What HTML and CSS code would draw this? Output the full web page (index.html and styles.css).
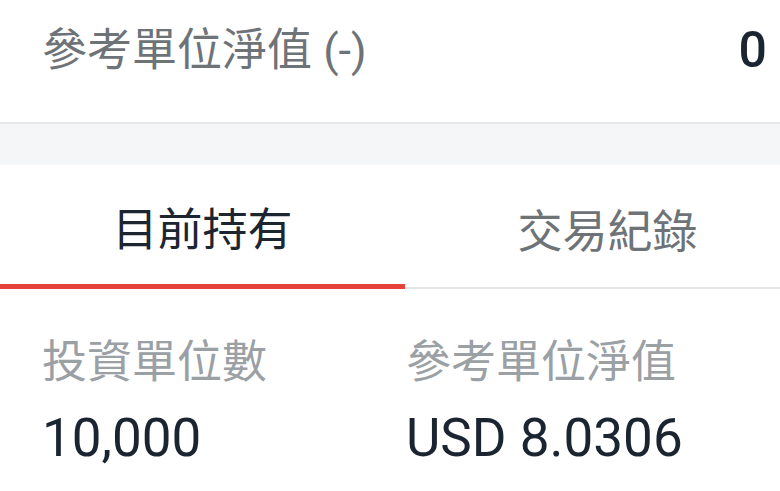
FILE: index.html
```html
<!DOCTYPE html>
<html lang="zh-Hant">
<head>
<meta charset="utf-8">
<link rel="stylesheet" href="styles.css">
</head>
<body>
<div class="page">
  <div class="summary">
    <span class="summary-label">參考單位淨值 (-)</span>
    <span class="summary-value">0</span>
  </div>
  <div class="band"></div>
  <div class="tabs">
    <div class="tab active">目前持有</div>
    <div class="tab">交易紀錄</div>
  </div>
  <div class="stats">
    <div class="stat">
      <div class="stat-label">投資單位數</div>
      <div class="stat-value">10,000</div>
    </div>
    <div class="stat">
      <div class="stat-label">參考單位淨值</div>
      <div class="stat-value">USD 8.0306</div>
    </div>
  </div>
</div>
</body>
</html>
```
FILE: styles.css
```css
* { box-sizing: border-box; }
html, body { margin: 0; padding: 0; background: #fff; }
body {
  font-family: Roboto, "Noto Sans CJK TC", sans-serif;
  width: 780px;
  height: 491px;
  overflow: hidden;
}
.page { width: 780px; }
.summary {
  height: 124px;
  display: flex;
  align-items: center;
  justify-content: space-between;
  padding: 0 13px 0 42px;
  border-bottom: 2px solid #e6e7e9;
}
.summary-label {
  font-size: 45px;
  color: #6e7378;
  line-height: 1;
  margin-top: -22px;
}
.summary-value {
  font-size: 50px;
  font-weight: 500;
  color: #1b2532;
  line-height: 1;
  margin-top: -22px;
}
.band {
  height: 41px;
  background: #f5f6f8;
}
.tabs {
  display: grid;
  grid-template-columns: 405px 405px;
  height: 124px;
  border-bottom: 2px solid #e4e5e8;
}
.tab {
  display: flex;
  align-items: center;
  justify-content: center;
  font-size: 45px;
  color: #6e7378;
  padding-top: 4px;
}
.tab.active {
  color: #1c2530;
  border-bottom: 5px solid #e6423a;
  margin-bottom: -2px;
}
.stats {
  display: grid;
  grid-template-columns: 364px 1fr;
  padding: 51px 0 0 42px;
}
.stat-label {
  font-size: 45px;
  color: #9ba0a5;
  line-height: 1;
}
.stat-value {
  font-size: 53px;
  color: #1b2532;
  line-height: 1;
  margin-top: 27px;
}
```
